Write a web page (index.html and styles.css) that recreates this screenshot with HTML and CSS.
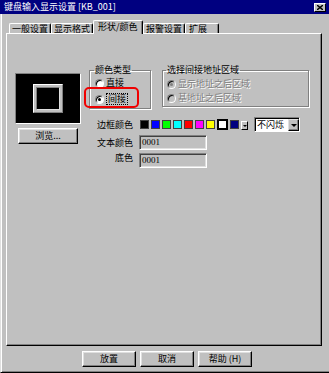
FILE: index.html
```html
<!DOCTYPE html>
<html lang="zh-CN">
<head>
  <meta charset="UTF-8">
  <title>键盘输入显示设置</title>
  <link rel="stylesheet" href="styles.css">
</head>
<body>
  <div class="window">
    <div class="titlebar">
      <span class="title">键盘输入显示设置 [KB_001]</span>
      <span class="close">
        <svg width="6" height="5" viewBox="0 0 6 5"><path d="M0 0L6 5M6 0L0 5" stroke="#000" stroke-width="1.4"/></svg>
      </span>
    </div>

    <div class="frame">
      <div class="tabs">
        <div class="tab">一般设置</div>
        <div class="tab">显示格式</div>
        <div class="tab active">形状/颜色</div>
        <div class="tab">报警设置</div>
        <div class="tab short">扩展</div>
      </div>

      <div class="panel">
        <div class="preview-col">
          <div class="preview">
            <div class="square"><div class="hole"></div></div>
          </div>
          <div class="btn browse">浏览...</div>
        </div>

        <div class="side">
          <div class="groups">
            <fieldset class="group type">
              <legend>颜色类型</legend>
              <div class="opt"><span class="radio"></span>直接</div>
              <div class="opt"><span class="radio on"></span><span class="focus">间接</span></div>
            </fieldset>
            <fieldset class="group area">
              <legend>选择间接地址区域</legend>
              <div class="opt off"><span class="radio on"></span>显示地址之后区域</div>
              <div class="opt off"><span class="radio"></span>基地址之后区域</div>
            </fieldset>
          </div>

          <!-- 红框标注 -->
          <div class="mark"></div>

          <div class="colors">
            <div class="lbl">边框颜色</div>
            <div class="swatches">
              <span class="sw" style="background:#000000"></span>
              <span class="sw" style="background:#0000ff"></span>
              <span class="sw" style="background:#00ff00"></span>
              <span class="sw" style="background:#00ffff"></span>
              <span class="sw" style="background:#ff0000"></span>
              <span class="sw" style="background:#ff00ff"></span>
              <span class="sw" style="background:#ffff00"></span>
              <span class="sw sel" style="background:#ffffff"></span>
              <span class="sw" style="background:#000080"></span>
              <span class="more"><i class="arrow"></i></span>
              <div class="combo">
                <span class="combo-text">不闪烁</span>
                <span class="combo-btn"><i class="arrow"></i></span>
              </div>
            </div>

            <div class="lbl">文本颜色</div>
            <div class="field">0001</div>

            <div class="lbl top">底色</div>
            <div class="field">0001</div>
          </div>
        </div>
      </div>

      <div class="actions">
        <div class="btn">放置</div>
        <div class="btn">取消</div>
        <div class="btn">帮助 (H)</div>
      </div>
    </div>
  </div>
</body>
</html>
```

FILE: styles.css
```css
body {
  margin: 0;
  padding: 0;
  background: #c0c0c0;
  font-family: "Noto Sans CJK SC", "Noto Sans", sans-serif;
  font-size: 9px;
  line-height: 10px;
  color: #000;
}

.window {
  width: 329px;
  height: 373px;
  display: flex;
  flex-direction: column;
  background: #c0c0c0;
  overflow: hidden;
}

/* 标题栏 */
.titlebar {
  height: 14px;
  flex: none;
  background: #000080;
  color: #fff;
  display: flex;
  align-items: center;
  justify-content: space-between;
  padding: 0 3px 0 4px;
}

.title {
  line-height: 10px;
}

.close {
  width: 12px;
  height: 9px;
  box-sizing: border-box;
  background: #c0c0c0;
  border: 1px solid;
  border-color: #fff #000 #000 #fff;
  display: flex;
  align-items: center;
  justify-content: center;
}

.close svg {
  display: block;
}

.frame {
  flex: 1;
  border-left: 1px solid #dfdfdf;
  border-bottom: 1px solid #000;
  box-shadow: inset 1px 0 0 #fff, inset 0 -1px 0 #808080;
  padding: 6px 0 0 5px;
}

/* 选项卡 */
.tabs {
  display: flex;
  align-items: flex-end;
  height: 13px;
  margin-left: 3px;
}

.tab {
  box-sizing: border-box;
  width: 42px;
  height: 10px;
  line-height: 9px;
  padding-left: 2px;
  border-top: 1px solid #fff;
  border-left: 1px solid #fff;
  border-right: 1px solid #000;
  box-shadow: inset -1px 0 0 #808080;
  border-radius: 2px 2px 0 0;
  white-space: nowrap;
}

.tab.active {
  width: 50px;
  height: 14px;
  line-height: 11px;
  padding-left: 4px;
  margin-bottom: -1px;
  background: #c0c0c0;
  position: relative;
  z-index: 1;
}

.tab.short {
  width: 34px;
  padding-left: 3px;
}

.panel {
  width: 316px;
  height: 313px;
  box-sizing: border-box;
  border: 1px solid;
  border-color: #fff #000 #000 #fff;
  box-shadow: inset -1px -1px 0 #808080;
  display: flex;
  padding: 31px 0 0 8px;
}

/* 左侧预览 */
.preview-col {
  width: 66px;
  margin-top: 8px;
  display: flex;
  flex-direction: column;
  align-items: center;
}

.preview {
  width: 66px;
  height: 51px;
  box-sizing: border-box;
  background: #000;
  border: 1px solid;
  border-color: #808080 #fff #fff #808080;
  display: flex;
  align-items: center;
  justify-content: center;
}

.square {
  width: 30px;
  height: 29px;
  box-sizing: border-box;
  background: #c0c0c0;
  border: 1px solid;
  border-color: #fff #808080 #808080 #fff;
  padding: 2px;
}

.hole {
  height: 100%;
  box-sizing: border-box;
  background: #000;
  border: 1px solid;
  border-color: #808080 #dfdfdf #dfdfdf #808080;
}

.btn {
  box-sizing: border-box;
  width: 54px;
  height: 16px;
  background: #c0c0c0;
  border: 1px solid;
  border-color: #fff #000 #000 #fff;
  box-shadow: inset -1px -1px 0 #808080, inset 1px 1px 0 #dfdfdf;
  display: flex;
  align-items: center;
  justify-content: center;
}

.browse {
  width: 60px;
  margin-top: 4px;
}

/* 右侧 */
.side {
  margin-left: 8px;
  position: relative;
}

.groups {
  display: flex;
  align-items: flex-start;
  gap: 11px;
}

.group {
  margin: 0;
  min-width: 0;
  border: 1px solid #808080;
  box-shadow: 1px 1px 0 #fff, inset 1px 1px 0 #fff;
  padding: 0 4px 1px 5px;
}

.group legend {
  padding: 0 1px;
  margin-left: -1px;
  line-height: 10px;
}

.type {
  width: 62px;
  box-sizing: border-box;
}

.area {
  width: 147px;
  box-sizing: border-box;
  padding-left: 4px;
  padding-top: 2px;
}

.opt {
  display: flex;
  align-items: center;
  height: 16px;
  white-space: nowrap;
}

.area .opt {
  height: 14px;
}

.opt.off {
  color: #808080;
  text-shadow: 1px 1px 0 #fff;
}

.radio {
  width: 9px;
  height: 9px;
  box-sizing: border-box;
  border-radius: 50%;
  border: 1px solid;
  border-color: #808080 #fff #fff #808080;
  box-shadow: inset 1px 1px 0 #000;
  background: #fff;
  margin-right: 2px;
  position: relative;
  flex: none;
}

.radio.on::after {
  content: "";
  position: absolute;
  left: 2px;
  top: 2px;
  width: 3px;
  height: 3px;
  border-radius: 50%;
  background: #000;
}

.off .radio {
  background: #c0c0c0;
}

.off .radio.on::after {
  background: #808080;
}

.focus {
  display: inline-block;
  border: 1px dotted #000;
  padding: 0 1px;
  line-height: 10px;
  height: 12px;
  box-sizing: border-box;
}

.mark {
  position: absolute;
  left: -5px;
  top: 22px;
  width: 55px;
  height: 21px;
  box-sizing: border-box;
  border: 2px solid #f00000;
  border-radius: 5px;
}

/* 颜色设置 */
.colors {
  display: grid;
  grid-template-columns: 44px auto;
  column-gap: 6px;
  row-gap: 3px;
  margin-top: 8px;
  align-items: center;
}

.lbl {
  text-align: right;
  white-space: nowrap;
}

.lbl.top {
  align-self: start;
}

.swatches {
  display: flex;
  align-items: center;
  gap: 2px;
  height: 15px;
  margin-left: 1px;
}

.sw {
  width: 9px;
  height: 9px;
  box-sizing: border-box;
  border: 1px solid #404040;
  flex: none;
}

.sw.sel {
  width: 11px;
  height: 11px;
  border: 2px solid #000;
}

.more {
  width: 7px;
  height: 9px;
  box-sizing: border-box;
  border: 1px solid;
  border-color: #fff #000 #000 #fff;
  display: flex;
  align-items: center;
  justify-content: center;
  margin-top: 2px;
}

.arrow {
  width: 0;
  height: 0;
  border-left: 2px solid transparent;
  border-right: 2px solid transparent;
  border-top: 2px solid #000;
}

.combo {
  width: 46px;
  height: 15px;
  box-sizing: border-box;
  margin-left: 4px;
  border: 1px solid;
  border-color: #808080 #fff #fff #808080;
  box-shadow: inset 1px 1px 0 #000;
  background: #fff;
  display: flex;
  align-items: center;
  justify-content: space-between;
  padding: 1px 0 0 2px;
}

.combo-btn {
  width: 11px;
  height: 12px;
  box-sizing: border-box;
  background: #c0c0c0;
  border: 1px solid;
  border-color: #dfdfdf #000 #000 #dfdfdf;
  box-shadow: inset -1px -1px 0 #808080;
  display: flex;
  align-items: center;
  justify-content: center;
}

.combo-btn .arrow {
  border-left-width: 3px;
  border-right-width: 3px;
  border-top-width: 3px;
}

.field {
  width: 68px;
  height: 15px;
  box-sizing: border-box;
  border: 1px solid;
  border-color: #808080 #fff #fff #808080;
  box-shadow: inset 1px 1px 0 #404040, inset -1px -1px 0 #dfdfdf;
  font-family: "Liberation Serif", serif;
  font-size: 9px;
  line-height: 11px;
  padding: 1px 0 0 2px;
}

/* 底部按钮 */
.actions {
  display: flex;
  justify-content: center;
  gap: 4px;
  margin-top: 5px;
  padding-left: 6px;
  width: 316px;
  box-sizing: border-box;
}
```
